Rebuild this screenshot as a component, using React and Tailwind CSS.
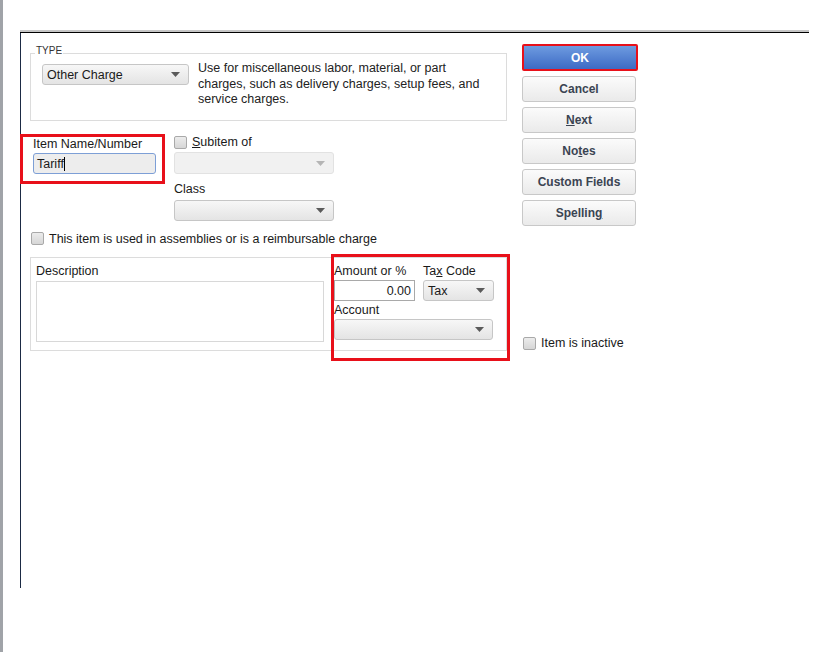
import React from "react";

const font = { fontFamily: '"Liberation Sans", Arial, sans-serif' };

function Arrow({ dim }) {
    return (
        <svg width="9" height="5" viewBox="0 0 9 5" className="shrink-0">
            <path d="M0 0 L9 0 L4.5 5 Z" fill={dim ? "#b5b5b5" : "#5a5a5a"} />
        </svg>
    );
}

function Select({ className, text, disabled }) {
    return (
        <div
            className={
                "flex items-center justify-between rounded-[3px] border pl-[4px] pr-[8px] text-[12.5px] text-[#1a1a1a] " +
                (disabled
                    ? "border-[#e2e2e2] bg-[#f1f1f1] "
                    : "border-[#c6c6c6] bg-gradient-to-b from-[#f7f7f7] to-[#e4e4e4] ") +
                className
            }
        >
            <span>{text}</span>
            <Arrow dim={disabled} />
        </div>
    );
}

function Check() {
    return <div className="h-[13px] w-[13px] shrink-0 rounded-[2px] border border-[#a9a9a9] bg-gradient-to-b from-[#ececec] to-[#d6d6d6]" />;
}

function Btn({ children, primary }) {
    if (primary) {
        return (
            <div className="flex h-[27px] w-[116px] items-center justify-center rounded-[2px] border-2 border-[#e8101a] bg-gradient-to-b from-[#6e9be0] to-[#3d6ac4] text-[12px] font-bold text-white">
                {children}
            </div>
        );
    }
    return (
        <div className="mt-[5px] flex h-[26px] w-[114px] items-center justify-center rounded-[3px] border border-[#c8c8c8] bg-gradient-to-b from-[#fbfbfb] to-[#eaeaea] text-[12px] font-bold text-[#3b4452]">
            {children}
        </div>
    );
}

export default function App() {
    return (
        <div className="flex h-[652px] w-[837px] overflow-hidden bg-white" style={font}>
            {/* left window edge */}
            <div className="h-full w-[3px] bg-[#a0a3a8]" />

            <div className="ml-[17px] flex flex-col">
                <div className="h-[30px]" />
                <div className="h-[2px] w-[789px] bg-[#c6c6c6]" />
                <div className="h-[1px] w-[789px] bg-black" />

                <div className="flex h-[555px] border-l border-[#1b2a44]">
                    {/* form column */}
                    <div className="flex w-[486px] flex-col pl-[9px] text-[12.5px] leading-[14px] text-[#1a1a1a]">
                        {/* TYPE */}
                        <div className="relative mt-[20px] flex h-[68px] w-[477px] border border-[#dcdcdc] pl-[11px] pt-[10px]">
                            <span className="absolute left-[4px] top-[-9px] bg-white px-[1px] text-[10px] leading-[12px] text-[#333]">TYPE</span>
                            <Select className="h-[21px] w-[147px]" text="Other Charge" />
                            <div className="-mt-[3px] ml-[9px] whitespace-nowrap leading-[15.5px] text-[#222]">
                                Use for miscellaneous labor, material, or part
                                <br />
                                charges, such as delivery charges, setup fees, and
                                <br />
                                service charges.
                            </div>
                        </div>

                        {/* name / subitem / class */}
                        <div className="flex items-start">
                            <div className="-ml-[10px] mt-[13px] flex h-[50px] w-[145px] flex-col border-[3px] border-[#e8101a] pl-[10px]">
                                <span>Item Name/Number</span>
                                <div className="mt-[2px] flex h-[21px] w-[123px] items-center rounded-[3px] border border-[#7d9fd6] bg-[#ededed] pl-[3px]">
                                    <span>Tariff</span>
                                    <span className="inline-block h-[14px] w-[1px] bg-black" />
                                </div>
                            </div>
                            <div className="ml-[9px] mt-[14px] flex flex-col">
                                <div className="flex h-[14px] items-center">
                                    <Check />
                                    <span className="ml-[5px]">
                                        <span className="underline">S</span>ubitem of
                                    </span>
                                </div>
                                <Select className="mt-[3px] h-[22px] w-[160px]" text="" disabled />
                                <span className="mt-[8px]">Class</span>
                                <Select className="mt-[4px] h-[21px] w-[160px]" text="" />
                            </div>
                        </div>

                        <div className="mt-[11px] flex h-[13px] items-center">
                            <div className="ml-[1px]">
                                <Check />
                            </div>
                            <span className="ml-[5px]">This item is used in assemblies or is a reimbursable charge</span>
                        </div>

                        {/* description / amount panel */}
                        <div className="relative mt-[12px] flex h-[94px] w-[477px] border border-[#dcdcdc] pl-[5px] pt-[6px]">
                            <div className="flex flex-col">
                                <span>Description</span>
                                <div className="mt-[3px] h-[61px] w-[288px] border border-[#d8d8d8] bg-white" />
                            </div>
                            <div className="ml-[10px] flex flex-col">
                                <div className="flex">
                                    <div className="flex flex-col">
                                        <span>Amount or %</span>
                                        <div className="mt-[2px] flex h-[21px] w-[81px] items-center justify-end border border-[#a9a9a9] bg-white pr-[3px]">
                                            0.00
                                        </div>
                                    </div>
                                    <div className="ml-[8px] flex flex-col">
                                        <span>
                                            Ta<span className="underline">x</span> Code
                                        </span>
                                        <Select className="mt-[2px] h-[21px] w-[71px]" text="Tax" />
                                    </div>
                                </div>
                                <span className="mt-[2px]">Account</span>
                                <Select className="mt-[2px] h-[21px] w-[159px]" text="" />
                            </div>
                            {/* highlight box */}
                            <div className="pointer-events-none absolute left-[300px] top-[-4px] h-[107px] w-[179px] border-[3px] border-[#e8101a]" />
                        </div>
                    </div>

                    {/* buttons column */}
                    <div className="ml-[15px] mt-[11px] flex flex-col">
                        <Btn primary>OK</Btn>
                        <Btn>Cancel</Btn>
                        <Btn>
                            <span className="underline">N</span>ext
                        </Btn>
                        <Btn>
                            No<span className="underline">t</span>es
                        </Btn>
                        <Btn>Custom Fields</Btn>
                        <Btn>
                            Spellin<span className="underline">g</span>
                        </Btn>
                        <div className="ml-[1px] mt-[111px] flex h-[13px] items-center text-[12.5px] text-[#1a1a1a]">
                            <Check />
                            <span className="ml-[5px]">Item is inactive</span>
                        </div>
                    </div>
                </div>
            </div>
        </div>
    );
}
